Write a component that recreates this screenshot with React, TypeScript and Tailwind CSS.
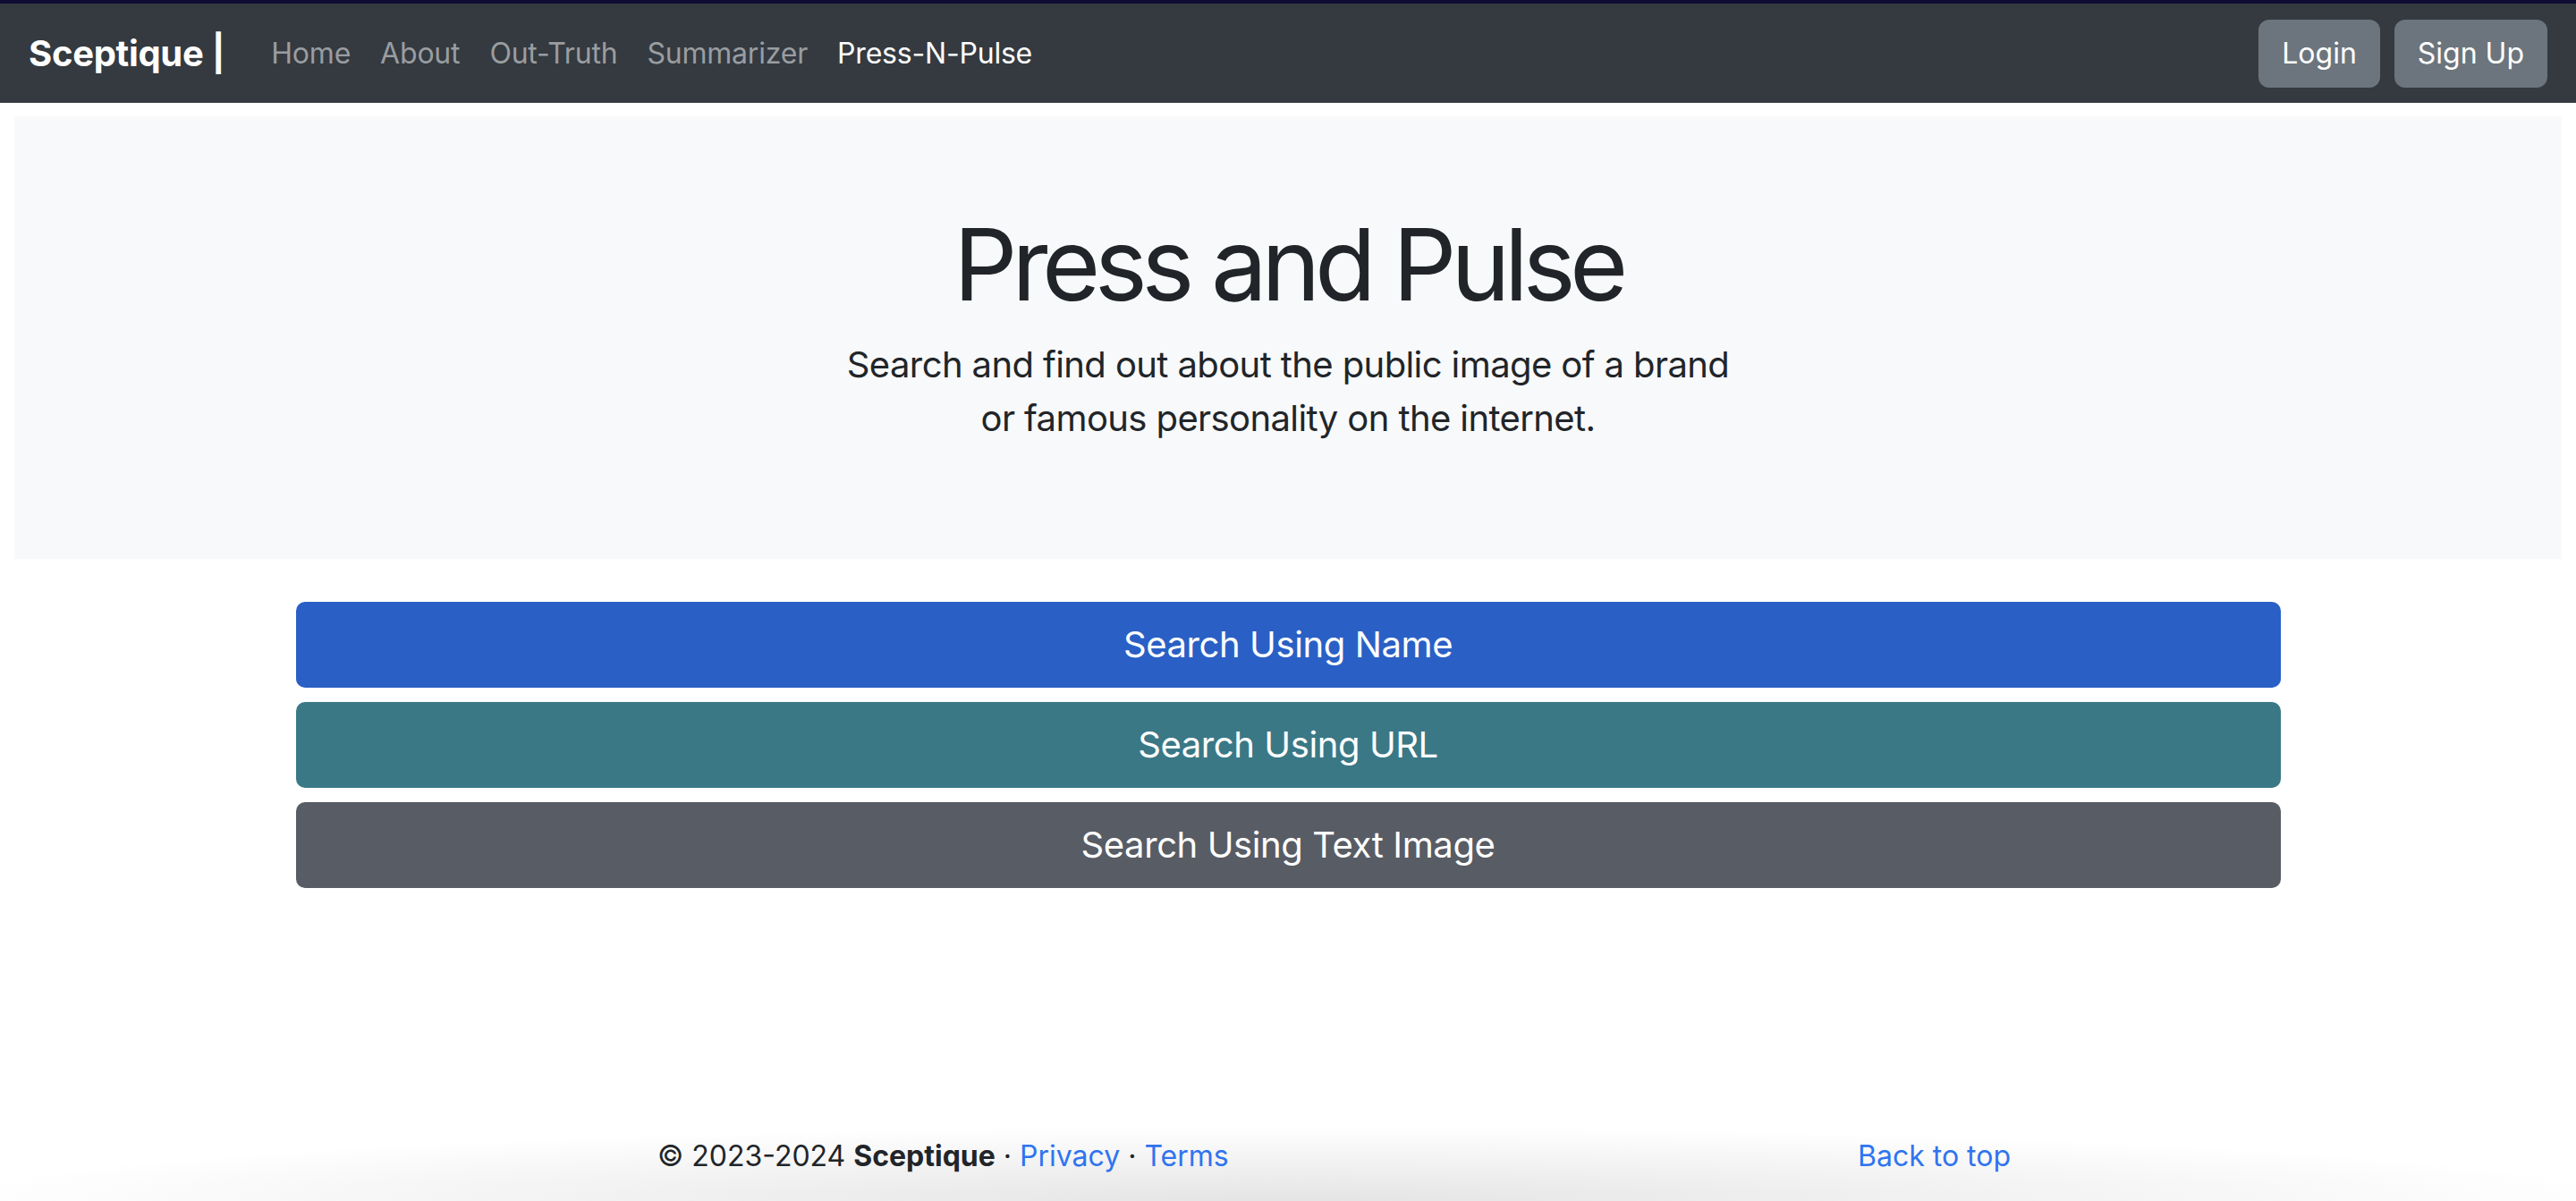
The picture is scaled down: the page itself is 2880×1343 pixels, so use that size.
const navLinks = ["Home", "About", "Out-Truth", "Summarizer"];

const searchOptions = [
  { label: "Search Using Name", color: "bg-[#2a60c5]" },
  { label: "Search Using URL", color: "bg-[#3a7886]" },
  { label: "Search Using Text Image", color: "bg-[#585c64]" },
];

export default function App() {
  return <div className="h-[1343px] w-full overflow-hidden bg-[#15163d] font-['Inter','Liberation_Sans',sans-serif] text-[#212529]">
    <div className="h-[4px] bg-[#0e0c33]" />
    <div className="flex h-[1339px] flex-col rounded-b-[22px] bg-white">
      <nav className="flex h-[111px] shrink-0 items-center justify-between bg-[#343a40] pl-[32px] pr-[32px]">
        <div className="flex items-center">
          <a className="mr-[52px] text-[40px] font-bold tracking-[-0.3px] text-white">Sceptique |</a>
          <ul className="flex items-center gap-[33px] text-[32px] tracking-[-0.2px]">
            {navLinks.map((link) => <li key={link} className="text-[#9a9da0]">{link}</li>)}
            <li className="text-white">Press-N-Pulse</li>
          </ul>
        </div>
        <div className="flex items-center gap-[16px]">
          <button className="h-[76px] rounded-[12px] bg-[#6c757d] px-[26px] text-[32px] text-white">Login</button>
          <button className="h-[76px] rounded-[12px] bg-[#6c757d] px-[26px] text-[32px] text-white">Sign Up</button>
        </div>
      </nav>

      <section className="mx-[16px] mt-[15px] h-[495px] shrink-0 bg-[#f8f9fa] pt-[98px] text-center">
        <h1 className="mb-[16px] text-[112px] font-normal leading-[1.2] tracking-[-6.5px]">Press and Pulse</h1>
        <p className="text-[40px] leading-[60px] tracking-[-0.6px]">Search and find out about the public image of a brand<br />or famous personality on the internet.</p>
      </section>

      <div className="mx-auto mt-[48px] flex w-[2219px] flex-col gap-[16px]">
        {searchOptions.map((option) => <button key={option.label} className={`h-[96px] w-full rounded-[10px] text-[40px] tracking-[-0.4px] text-white ${option.color}`}>{option.label}</button>)}
      </div>

      <footer className="mt-auto h-[110px] bg-[radial-gradient(ellipse_55%_80%_at_50%_100%,#e4e4e4,#ffffff_95%)] pt-[36px]">
        <div className="ml-[735px] flex w-[1513px] items-center justify-between text-[32px] leading-[48px]">
          <p>© 2023-2024 <b>Sceptique</b> · <a className="text-[#2f74f0]">Privacy</a> · <a className="text-[#2f74f0]">Terms</a></p>
          <a className="text-[#2f74f0]">Back to top</a>
        </div>
      </footer>
    </div>
  </div>;
}
